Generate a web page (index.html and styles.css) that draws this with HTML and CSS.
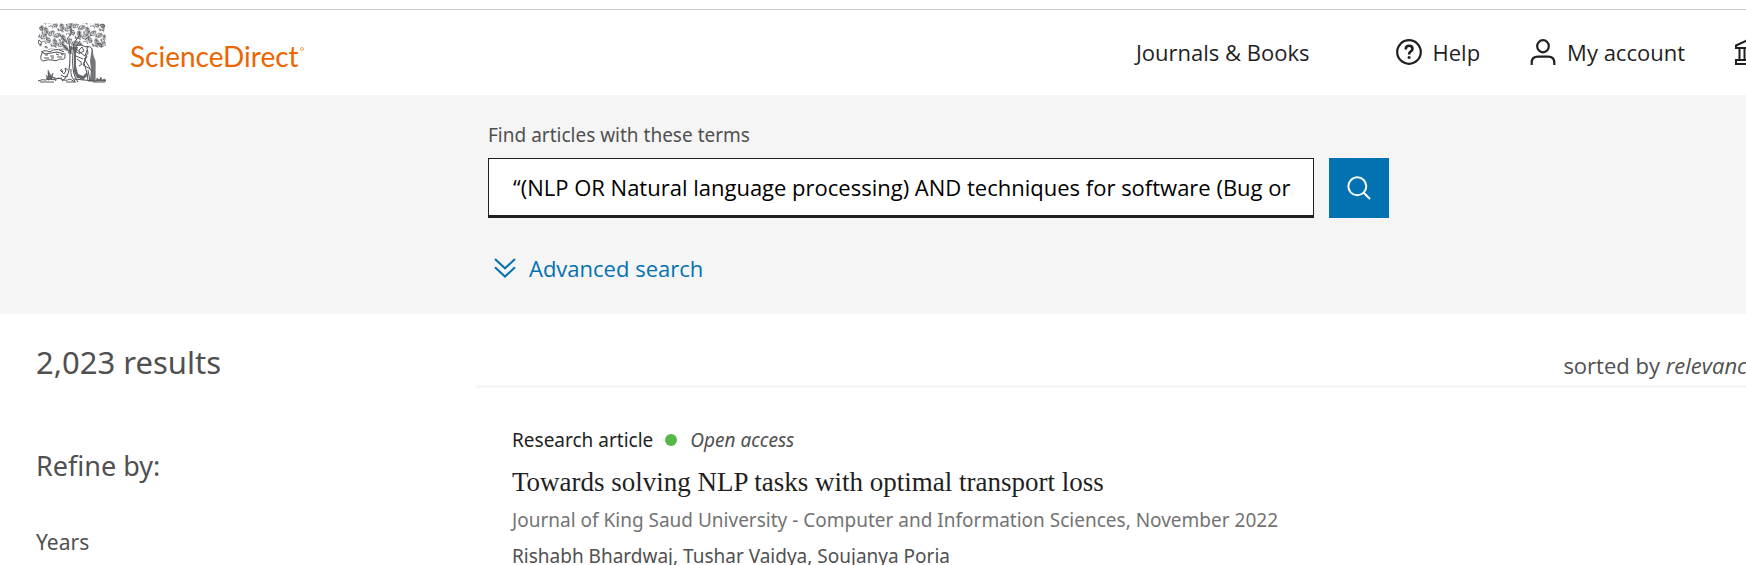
FILE: index.html
```html
<!DOCTYPE html>
<html lang="en">
<head>
<meta charset="utf-8">
<title>ScienceDirect search results</title>
<link rel="stylesheet" href="styles.css">
</head>
<body>
<header class="header">
  <a class="brand" href="#" aria-label="ScienceDirect home">
    <svg class="brand-tree" viewBox="0 0 68 60" aria-hidden="true" fill="none" stroke="#54565b" stroke-width="1">
      <defs>
        <pattern id="leaves" width="19" height="17" patternUnits="userSpaceOnUse" patternTransform="rotate(24)">
          <path d="M1 6q0-5 5-5q1 5-5 5M8 1q5 0 5 5q-5 1-5-5M15 7q-2-5 3-6q3 4-3 6M2 8q5 0 5 5q-5 1-5-5M9 13q-2-4 3-6q4 4-3 6M14 10q4-2 5 3q-4 2-5-3M2 16q3-3 6-1M11 16q3-4 5 0"/>
          <path d="M3 5l2-3M9 2l3 3M16 5l1-3M3 9l3 3M10 11l2-3M15 11l3 1M7 6l2 2M1 14l2 1" stroke-width="1.1"/>
        </pattern>
      </defs>
      <path fill="url(#leaves)" stroke="none" d="M3 1l6-1 5 1 6-1 7 1 6-1 7 1 8-1 6 1 7-1 6 2-1 7 2 4-1 5 1 4-5 4-6-2-5 3-6-5-7 1-5 4-4 4-3-4-5 2-5-4-6 2-5-3-5-1 2-5-3-4 2-4z"/>
      <path d="M1 17q-2 4 2 5q2-3-2-5M2 4q3 0 3 3q-4 1-3-3M62 2q4-2 5 1q-3 3-5-1M61 20q3 0 3 4q-4 0-3-4M33 3v8l-4 5M36 20l5-7 1-5M28 19l-6-7M53 12l-6 5"/>
      <path d="M31 18q2 17 0 29q-1 7-7 11M36 20q-2 15-1 25q1 9 5 14M32 29l-8-8M35 28l7-10M33 23v8" stroke-width="1.1"/>
      <path d="M3 29q3-2 6-1q3 2 6-1q5-2 11 2M4 30q-3 7 1 8q6-2 9-1q4 2 8-1q5 1 5-2v-4M7 32h3M12 33h4M18 31l3 1M23 31l2 1M6 35h5M13 35h3M19 34h5" />
      <path d="M4 29l3 2 6-1 6-1 7 2" stroke-width="1.1"/>
      <path d="M36 24v25l3 6 7 1 5-5-1-3-5 5-5-2-2-8V30l2-6z" fill="#64666b" stroke="none"/>
      <path d="M36 23l7-1 5 2 2-1M37 28l5 3M38 33l7 3M41 43q4-1 2-4l-4-3"/>
      <path d="M49 25q3-3 5 1l1 7 2 5v20h-7l-1-8-3-10 2-7 2-3z" fill="#fff"/>
      <path d="M54 25l1 8 2 6v19l-5-1 1-11-1-8 1-7z" fill="#737579" stroke="none"/>
      <path d="M49 27l-2 6-4-3-5-4M49 33l-4 9 7 4M46 35l8 14M50 47l2 11M41 27l3-3 2 4-4 2z"/>
      <path d="M22 47l4 4q3-3 1-6M23 46l2 3M27 45l3 2M33 46q-1 8 4 12"/>
      <path d="M0 58q4-2 8-1l3-1q5 2 10-1q6 4 11 1l5 3M36 56l10 1 12 1 3-1 7 1M2 59h14M28 59h10M55 59h12"/>
      <path d="M10 57l-2-5 2 2v-7l3 6 2-3-1 6zM58 58l1-3 2 2 2-3 1 3 3-1 1 2z" fill="#64666b" stroke-width=".5"/>
      <path d="M14 54q5 3 10 1M23 52q3 3 7 1M8 55l3 2M15 54l3 4M42 55l4 2"/>
    </svg>
    <span class="brand-name">ScienceDirect</span><span class="brand-mark" aria-hidden="true"></span>
  </a>
  <nav class="nav" aria-label="Main">
    <a class="nav-link nav-books" href="#">Journals &amp; Books</a>
    <a class="nav-link nav-help" href="#">
      <svg class="nav-icon" viewBox="0 0 26 26" aria-hidden="true" fill="none" stroke="#1f1f1f" stroke-width="2.2">
        <circle cx="13" cy="13" r="11.8"/>
        <path stroke-width="2.6" d="M9.7 10.4q0-3.6 3.4-3.6q3.4 0 3.4 3q0 1.7-1.7 2.6q-1.7 1-1.7 3"/>
        <path d="M13.1 17.2v2.6" stroke-width="2.7"/>
      </svg>
      Help</a>
    <a class="nav-link nav-account" href="#">
      <svg class="nav-icon" viewBox="0 0 26 26" aria-hidden="true" fill="none" stroke="#1f1f1f" stroke-width="2.2">
        <ellipse cx="13" cy="7.2" rx="5.8" ry="6.1"/>
        <path d="M1.7 26v-2.2q0-6.2 6.2-6.2h10.2q6.2 0 6.2 6.2v2.2"/>
      </svg>
      My account</a>
    <a class="nav-link nav-institution" href="#" aria-label="Institution">
      <svg class="nav-icon" viewBox="0 0 26 26" aria-hidden="true" fill="none" stroke="#1f1f1f" stroke-width="2">
        <path d="M1 9V6.5L13 1l12 5.500V9zM4.500 9v12M9.500 9v12M16.500 9v12M21.500 9v12M1 25v-4h24v4z"/>
      </svg>
    </a>
  </nav>
</header>

<form class="search" role="search">
  <div class="search-inner">
    <label class="search-label" for="terms">Find articles with these terms</label>
    <div class="search-row">
      <input class="search-input" id="terms" type="text" value="“(NLP OR Natural language processing) AND techniques for software (Bug or">
      <button class="search-button" type="button" aria-label="Search">
        <svg class="search-icon" viewBox="0 0 24 24" aria-hidden="true" fill="none" stroke="#fff" stroke-width="2">
          <circle cx="10.3" cy="10.3" r="9"/>
          <path d="M16.7 16.7l6.3 6.3"/>
        </svg>
      </button>
    </div>
    <a class="advanced" href="#">
      <svg class="advanced-icon" viewBox="0 0 22 20" aria-hidden="true" fill="none" stroke="#0272b1" stroke-width="2">
        <path d="M1 1l10 9.3L21 1M1 9.3l10 9.3 10-9.3"/>
      </svg>
      Advanced search</a>
  </div>
</form>

<main class="content">
  <aside class="sidebar">
    <h1 class="count">2,023 results</h1>
    <h2 class="refine">Refine by:</h2>
    <h3 class="facet">Years</h3>
  </aside>
  <section class="results">
    <div class="sort">sorted by&nbsp;<em>relevance</em></div>
    <article class="result">
      <div class="kind"><span class="kind-name">Research article</span><span class="dot"></span><em>Open access</em></div>
      <h2 class="title"><a href="#">Towards solving NLP tasks with optimal transport loss</a></h2>
      <div class="journal">Journal of King Saud University - Computer and Information Sciences, November 2022</div>
      <div class="authors">Rishabh Bhardwaj, Tushar Vaidya, Soujanya Poria</div>
    </article>
  </section>
</main>
</body>
</html>
```
FILE: styles.css
```css
* { box-sizing: border-box; }

html { overflow: hidden; }

body {
  margin: 0;
  padding-top: 9px;
  overflow: hidden;
  background: #fff;
  color: #505050;
  font-family: "Open Sans", "Noto Sans", sans-serif;
  font-size: 22px;
  line-height: 28px;
}

a { color: inherit; text-decoration: none; }

h1, h2, h3 { margin: 0; font-weight: 400; }

.header {
  display: flex;
  align-items: center;
  justify-content: space-between;
  height: 86px;
  padding-left: 38px;
  border-top: 1px solid #ccc;
}

.brand { display: flex; align-items: center; color: #eb6500; }
.brand-tree { width: 68px; height: 60px; margin-right: 24px; }
.brand-name { font-family: Lato, sans-serif; font-size: 28px; line-height: 36px; padding-top: 6px; }
.brand-mark { width: 4px; height: 4px; margin: 0 0 8px 1px; border: 1px solid #f0a060; border-radius: 50%; }

.nav { display: flex; align-items: center; margin-right: -15px; padding-bottom: 2px; color: #1f1f1f; }
.nav-link { display: flex; align-items: center; gap: 11px; white-space: nowrap; }
.nav-icon { width: 26px; height: 26px; flex: none; }
.nav-books { margin-right: 86px; }
.nav-help, .nav-account { margin-right: 50px; }

.search { padding: 26px 36px 32px 488px; background: #f5f5f5; }
.search-inner { display: flex; flex-direction: column; align-items: flex-start; max-width: 901px; }
.search-label { font-family: "Noto Sans", sans-serif; font-size: 19px; }
.search-row { display: flex; gap: 15px; width: 100%; margin: 9px 0 36px; }
.search-input {
  flex: 1;
  min-width: 0;
  height: 60px;
  padding: 0 22px 0 24px;
  border: 1px solid #1f1f1f;
  border-bottom-width: 3px;
  border-radius: 0;
  background: #fff;
  color: #000;
  font: inherit;
}
.search-button {
  display: flex;
  align-items: center;
  justify-content: center;
  width: 60px;
  height: 60px;
  padding: 0;
  border: 0;
  background: #0272b1;
}
.search-icon { width: 24px; height: 24px; }
.advanced { display: flex; align-items: center; gap: 13px; padding-left: 6px; color: #0272b1; }
.advanced-icon { width: 22px; height: 20px; }

.content { display: flex; padding-left: 36px; }
.sidebar { flex: none; width: 440px; padding-top: 27px; font-family: "Noto Sans", sans-serif; }
.count { font-size: 31px; line-height: 42px; }
.refine { margin-top: 65px; font-size: 27px; line-height: 36px; }
.facet { margin-top: 44px; font-size: 21px; line-height: 28px; }

.results { flex: 1; min-width: 0; }
.sort {
  display: flex;
  justify-content: flex-end;
  padding: 37px 0 6px;
  margin-right: -12px;
  border-bottom: 3px solid #f5f5f5;
}
.result { padding: 38px 36px 0; font-family: "Noto Sans", sans-serif; font-size: 19px; }
.kind { display: flex; align-items: center; }
.kind-name { color: #1f1f1f; }
.dot { width: 12px; height: 12px; margin: 0 13px 0 12px; border-radius: 50%; background: #55b848; }
.title { margin: 10px 0 6px; color: #1f1f1f; font-family: "Liberation Serif", serif; font-size: 27px; line-height: 36px; }
.journal { color: #737373; }
.authors { margin-top: 8px; }
```
